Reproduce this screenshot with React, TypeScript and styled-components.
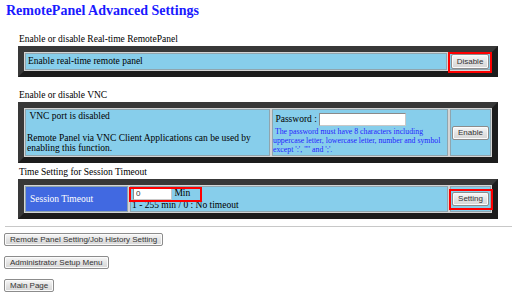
import React from 'react';
import styled, { createGlobalStyle } from 'styled-components';

const Global = createGlobalStyle`
  html, body { margin: 0; padding: 0; background: #ffffff; }
  body { font-family: "Liberation Serif", "Times New Roman", serif; color: #000; }
`;

const Page = styled.div`
  box-sizing: border-box;
  width: 517px;
  padding: 0 4px;
`;

const Title = styled.h1`
  margin: 3px 0 0 2px;
  font-size: 14px;
  line-height: 16px;
  font-weight: bold;
  color: #1a1aff;
`;

const Section = styled.section<{ $top: number }>`
  margin: ${(p) => p.$top}px 0 0 14px;
`;

const Label = styled.div`
  font-size: 9.5px;
  line-height: 11px;
  padding-left: 1px;
  margin-bottom: 1px;
`;

const Frame = styled.div<{ $h: number }>`
  box-sizing: border-box;
  width: 480px;
  height: ${(p) => p.$h}px;
  border: 6px solid;
  border-color: #383838 #1c1c1c #1c1c1c #383838;
  background: #d4d4d4;
  padding: 1px;
  display: flex;
  gap: 2px;
`;

const Cell = styled.div<{ $w: number; $royal?: boolean; $center?: boolean; $pl?: number }>`
  box-sizing: border-box;
  flex: none;
  width: ${(p) => p.$w}px;
  background: ${(p) => (p.$royal ? '#4169e1' : '#87ceeb')};
  border: 1px solid #8fa5ae;
  padding: 1px 1px 1px ${(p) => p.$pl ?? 1}px;
  display: flex;
  flex-direction: column;
  justify-content: center;
  align-items: ${(p) => (p.$center ? 'center' : 'flex-start')};
  font-size: 9.5px;
  line-height: 10.75px;
  color: ${(p) => (p.$royal ? '#ffffff' : '#000000')};
`;

const Para = styled.div`
  white-space: nowrap;
`;

const Row = styled.div`
  display: flex;
  align-items: center;
  height: 15px;
  white-space: pre;
`;

const InputRow = styled.div`
  display: flex;
  align-items: center;
  height: 13px;
  margin-left: 1px;
`;

const Note = styled.div`
  font-size: 7.8px;
  line-height: 9px;
  color: #2424ff;
  white-space: nowrap;
`;

const TextInput = styled.input<{ $w: number; $h: number }>`
  box-sizing: border-box;
  width: ${(p) => p.$w}px;
  height: ${(p) => p.$h}px;
  margin: 0;
  padding: 0 2px;
  border: 1px solid;
  border-color: #8a8a8a #c8c8c8 #c8c8c8 #8a8a8a;
  background: #ffffff;
  font-family: "Liberation Sans", Arial, sans-serif;
  font-size: 8px;
  color: #333;
  outline: none;
`;

const Marked = styled.span<{ $inset: string }>`
  position: relative;
  display: inline-flex;
  align-items: center;
  white-space: pre;
  &::after {
    content: '';
    position: absolute;
    inset: ${(p) => p.$inset};
    border: 2px solid #ff0000;
    pointer-events: none;
  }
`;

const Btn = styled.button<{ $h: number }>`
  box-sizing: border-box;
  height: ${(p) => p.$h}px;
  margin: 0;
  padding: 0 5px;
  border: 1px solid #8c8c8c;
  border-radius: 2px;
  background: linear-gradient(#f7f7f7, #e2e2e2 55%, #d6d6d6);
  box-shadow: inset 0 0 0 1px #fbfbfb;
  font-family: "Liberation Sans", Arial, sans-serif;
  font-size: 8px;
  line-height: 1;
  color: #333333;
  white-space: nowrap;
  cursor: pointer;
`;

const Rule = styled.hr`
  margin: 7px 1px 0;
  height: 0;
  border: none;
  border-top: 1px solid #c8c8c8;
`;

const NavList = styled.nav`
  margin-top: 6px;
  display: flex;
  flex-direction: column;
  align-items: flex-start;
  gap: 10px;
`;

export default function App() {
  return (
    <Page>
      <Global />
      <Title>RemotePanel Advanced Settings</Title>

      <Section $top={15}>
        <Label>Enable or disable Real-time RemotePanel</Label>
        <Frame $h={31}>
          <Cell $w={422} $pl={2}>
            <Para>Enable real-time remote panel</Para>
          </Cell>
          <Cell $w={42} $center>
            <Marked $inset="-2px -3px -4px -3px">
              <Btn $h={15}>Disable</Btn>
            </Marked>
          </Cell>
        </Frame>
      </Section>

      <Section $top={13}>
        <Label>Enable or disable VNC</Label>
        <Frame $h={61}>
          <Cell $w={245}>
            <Para>
              {'\u00a0VNC port is disabled'}
              <br />
              <br />
              Remote Panel via VNC Client Applications can be used by
              <br />
              enabling this function.
            </Para>
          </Cell>
          <Cell $w={176} $pl={0}>
            <Row>
              {'\u00a0Password : '}
              <TextInput $w={87} $h={13} type="text" />
            </Row>
            <Note>
              {'\u00a0The password must have 8 characters including'}
              <br />
              uppercase letter, lowercase letter, number and symbol
              <br />
              {"except ':', '\"' and ';'."}
            </Note>
          </Cell>
          <Cell $w={41} $center>
            <Btn $h={14}>Enable</Btn>
          </Cell>
        </Frame>
      </Section>

      <Section $top={4}>
        <Label>Time Setting for Session Timeout</Label>
        <Frame $h={40}>
          <Cell $w={103} $royal $pl={4}>
            <Para>Session Timeout</Para>
          </Cell>
          <Cell $w={318}>
            <InputRow>
              <Marked $inset="-1px -12px -2px -4px">
                <TextInput $w={39} $h={12} type="text" defaultValue="0" />
                {' Min'}
              </Marked>
            </InputRow>
            <Para>1 - 255 min / 0 : No timeout</Para>
          </Cell>
          <Cell $w={41} $center>
            <Marked $inset="-3px -4px -4px -3px">
              <Btn $h={14}>Setting</Btn>
            </Marked>
          </Cell>
        </Frame>
      </Section>

      <Rule />

      <NavList>
        <Btn $h={13}>Remote Panel Setting/Job History Setting</Btn>
        <Btn $h={13}>Administrator Setup Menu</Btn>
        <Btn $h={13}>Main Page</Btn>
      </NavList>
    </Page>
  );
}
